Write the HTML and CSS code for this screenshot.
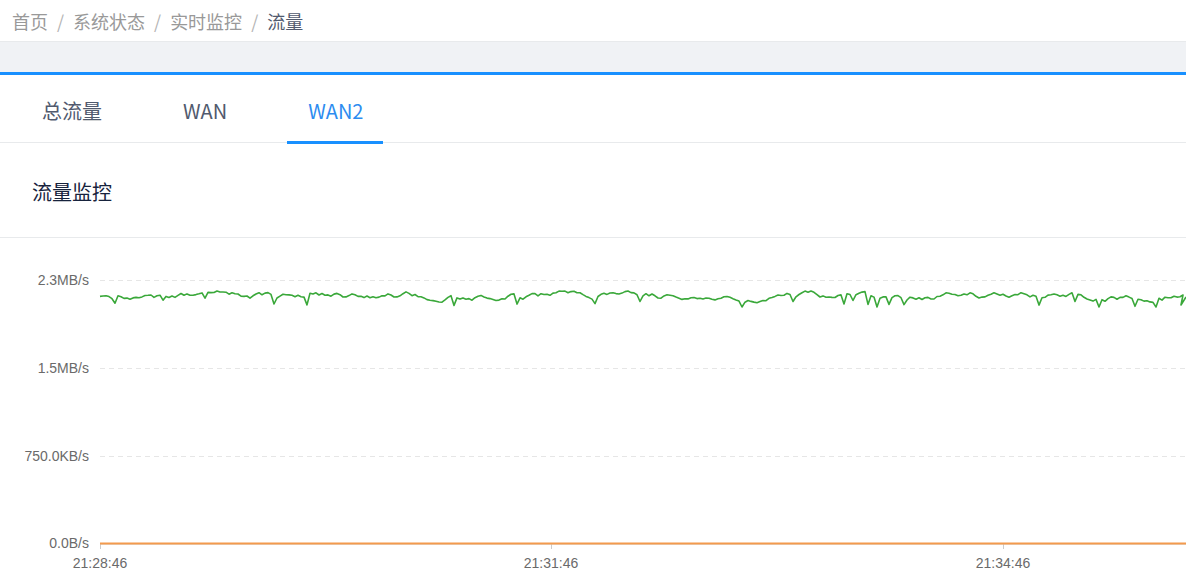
FILE: index.html
```html
<!DOCTYPE html>
<html lang="zh-CN">
<head>
<meta charset="utf-8">
<title>流量</title>
<link rel="stylesheet" href="styles.css">
</head>
<body>
<div class="breadcrumb">
  <span class="crumb">首页</span><span class="sep">/</span>
  <span class="crumb">系统状态</span><span class="sep">/</span>
  <span class="crumb">实时监控</span><span class="sep">/</span>
  <span class="crumb current">流量</span>
</div>
<div class="band"></div>
<div class="panel">
  <div class="tabs">
    <div class="tab">总流量</div>
    <div class="tab">WAN</div>
    <div class="tab active">WAN2</div>
  </div>
  <div class="card-head">流量监控</div>
  <div class="chart">
    <svg class="chart-svg" width="1186" height="343" viewBox="0 0 1186 343">
      <line class="grid" x1="100" y1="42.5" x2="1186" y2="42.5"/>
      <line class="grid" x1="100" y1="130.5" x2="1186" y2="130.5"/>
      <line class="grid" x1="100" y1="218.5" x2="1186" y2="218.5"/>
      <line class="axis" x1="100" y1="306" x2="1186" y2="306"/>
      <line class="tick" x1="100.5" y1="306" x2="100.5" y2="311"/>
      <line class="tick" x1="551.5" y1="306" x2="551.5" y2="311"/>
      <line class="tick" x1="1003.5" y1="306" x2="1003.5" y2="311"/>
      <text class="ylabel" x="89" y="43.5">2.3MB/s</text>
      <text class="ylabel" x="89" y="131.5">1.5MB/s</text>
      <text class="ylabel" x="89" y="219.5">750.0KB/s</text>
      <text class="ylabel" x="89" y="306.5">0.0B/s</text>
      <text class="xlabel" x="100" y="326.5">21:28:46</text>
      <text class="xlabel" x="551" y="326.5">21:31:46</text>
      <text class="xlabel" x="1003" y="326.5">21:34:46</text>
      <path id="rx" class="line-green" d=""/>
      <path class="line-orange" d="M100 305.5 H1186"/>
    </svg>
  </div>
</div>
<script src="script.js"></script>
</body>
</html>
```

FILE: styles.css
```css
html, body {
  margin: 0;
  padding: 0;
  background: #ffffff;
  overflow: hidden;
}
body {
  font-family: "Noto Sans CJK SC", "Noto Sans", sans-serif;
  color: #515a6e;
}
.breadcrumb {
  height: 41px;
  border-bottom: 1px solid #e8eaec;
  display: flex;
  align-items: center;
  padding-left: 12px;
  font-size: 18px;
  line-height: 1;
}
.crumb {
  color: #999999;
}
.crumb.current {
  color: #515a6e;
}
.sep {
  color: #b5b5b5;
  padding: 0 9px;
}
.band {
  height: 30px;
  background: #f0f2f5;
}
.panel {
  border-top: 3px solid #1890ff;
}
.tabs {
  display: flex;
  height: 67px;
  border-bottom: 1px solid #e8eaec;
  padding-left: 22px;
  gap: 41px;
}
.tab {
  position: relative;
  display: flex;
  align-items: center;
  padding: 3px 20px 0;
  font-size: 20px;
  color: #515a6e;
}
.tab.active {
  color: #2d8cf0;
}
.tab.active::after {
  content: "";
  position: absolute;
  left: -1px;
  right: 0;
  bottom: -2px;
  height: 3px;
  background: #1890ff;
}
.card-head {
  height: 95px;
  border-bottom: 1px solid #e8eaec;
  display: flex;
  align-items: center;
  padding: 2px 0 0 32px;
  box-sizing: border-box;
  font-size: 20px;
  color: #17233d;
}
.chart {
  height: 343px;
}
.chart-svg {
  display: block;
}
.grid {
  stroke: #e6e6e6;
  stroke-width: 1;
  stroke-dasharray: 5 4;
}
.axis {
  stroke: #cccccc;
  stroke-width: 1;
}
.tick {
  stroke: #cccccc;
  stroke-width: 1;
}
.ylabel, .xlabel {
  font-family: "Liberation Sans", Arial, sans-serif;
  font-size: 14px;
  fill: #6a6a6a;
  dominant-baseline: middle;
}
.ylabel {
  text-anchor: end;
}
.xlabel {
  text-anchor: middle;
}
.line-green {
  fill: none;
  stroke: #3aa83a;
  stroke-width: 1.6;
  stroke-linejoin: round;
}
.line-orange {
  fill: none;
  stroke: #f39a4d;
  stroke-width: 2;
}
```

FILE: script.js
```js
(function () {
  var seed = 7319;
  function rand() {
    seed |= 0; seed = seed + 0x6D2B79F5 | 0;
    var t = Math.imul(seed ^ seed >>> 15, 1 | seed);
    t = t + Math.imul(t ^ t >>> 7, 61 | t) ^ t;
    return ((t ^ t >>> 14) >>> 0) / 4294967296;
  }
  var pts = [];
  var v = 0;
  var base = 58; /* svg y, page y 296 */
  for (var x = 100; x <= 1183; x += 3) {
    v = v * 0.82 + (rand() - 0.5) * 4.6;
    var y = base + v;
    if (rand() < 0.045) {
      y += 5 + rand() * 6;
    }
    if (y < 53) y = 53;
    if (y > 69) y = 69;
    pts.push(x.toFixed(1) + " " + y.toFixed(1));
  }
  pts.push("1181 " + (base + 9).toFixed(1));
  pts.push("1186 " + (base + 1).toFixed(1));
  document.getElementById("rx").setAttribute("d", "M" + pts.join(" L"));
})();
```
